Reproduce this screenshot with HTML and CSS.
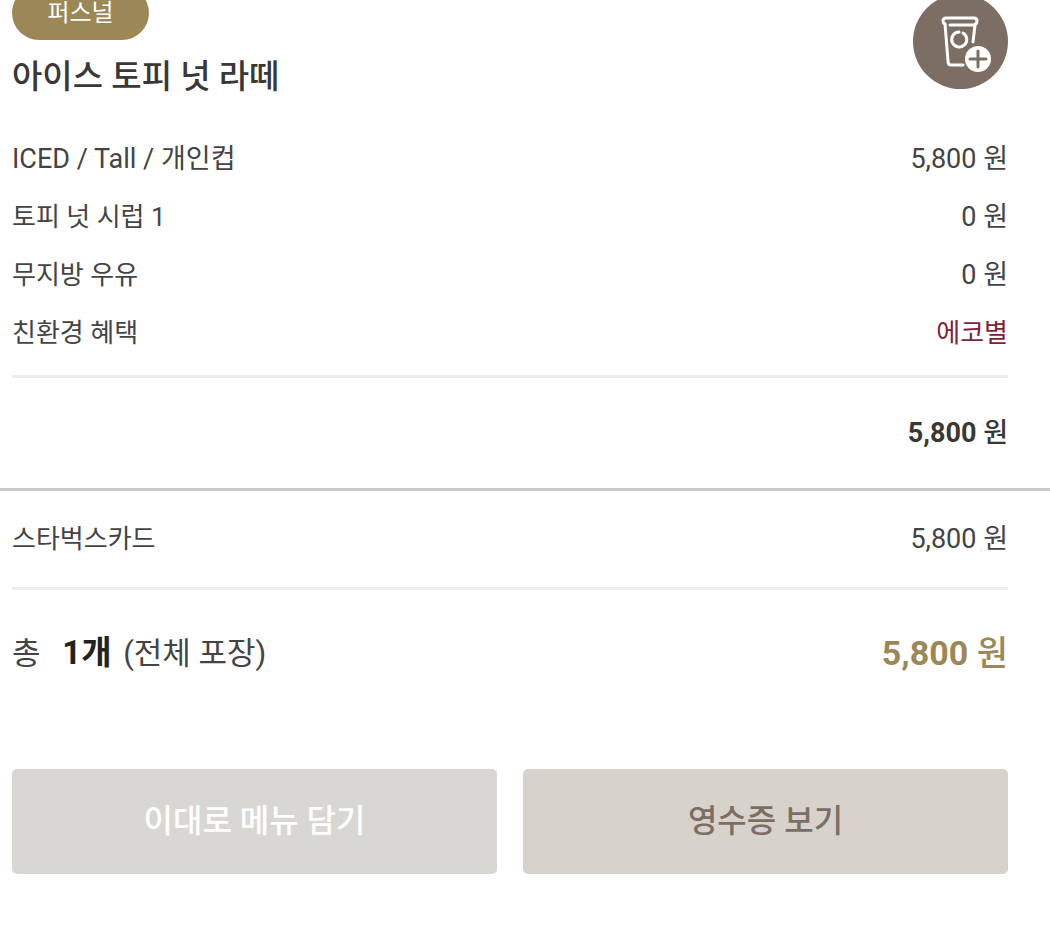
FILE: index.html
```html
<!DOCTYPE html>
<html lang="ko">
<head>
    <meta charset="UTF-8">
    <meta name="viewport" content="width=device-width, initial-scale=1.0">
    <title>주문 내역</title>
    <link rel="stylesheet" href="styles.css">
</head>
<body>
    <main>
        <section class="order">
            <div class="item-head">
                <div>
                    <span class="badge">퍼스널</span>
                    <h1>아이스 토피 넛 라떼</h1>
                </div>
                <button class="cup-button" type="button" aria-label="나만의 메뉴 등록">
                    <svg viewBox="0 0 95 95" fill="none" stroke="#fff" stroke-width="3" stroke-linecap="round" stroke-linejoin="round">
                        <path d="M32 30q-2-1-2-3 0-3 3-3h28q3 0 3 3 0 3-3 4H37"/>
                        <path d="M32 30l3 37q0 4 3 4h12M62 31l-2 17"/>
                        <path d="M50 39a7.5 7.5 0 1 1-4-1"/>
                        <circle cx="65" cy="65" r="13" fill="#fff" stroke="none"/>
                        <path d="M65 57v16M57 65h16" stroke="#7d6e64"/>
                    </svg>
                </button>
            </div>

            <dl class="rows">
                <div class="row"><dt class="option">ICED / Tall / 개인컵</dt><dd class="price">5,800 원</dd></div>
                <div class="row"><dt>토피 넛 시럽 1</dt><dd class="price">0 원</dd></div>
                <div class="row"><dt>무지방 우유</dt><dd class="price">0 원</dd></div>
                <div class="row"><dt>친환경 혜택</dt><dd class="eco">에코별</dd></div>
            </dl>
            <p class="subtotal">5,800 <span class="won">원</span></p>
        </section>

        <section class="payment">
            <dl class="card-row">
                <div class="row"><dt>스타벅스카드</dt><dd class="price">5,800 원</dd></div>
            </dl>
            <div class="total">
                <p>총 <strong>1개</strong> (전체 포장)</p>
                <strong class="total-price">5,800 <span class="won">원</span></strong>
            </div>
            <div class="actions">
                <button class="add" type="button">이대로 메뉴 담기</button>
                <button class="receipt" type="button">영수증 보기</button>
            </div>
        </section>
    </main>
</body>
</html>
```

FILE: styles.css
```css
* {
    box-sizing: border-box;
}
body {
    margin: 0;
    background: #fff;
    color: #444;
    font-family: Roboto, "Noto Sans CJK KR", sans-serif;
    font-size: 26px;
    line-height: 58px;
}
h1, p, dl, dd {
    margin: 0;
}
button {
    border: none;
    padding: 0;
    font-family: inherit;
    cursor: pointer;
}
.order {
    padding: 0 42px 0 12px;
    border-bottom: 3px solid #c9c9c9;
}
.item-head {
    display: flex;
    justify-content: space-between;
    align-items: flex-start;
    padding-bottom: 17px;
}
.badge {
    display: block;
    width: 137px;
    height: 54px;
    margin-top: -14px;
    border-radius: 27px;
    background: #9c8856;
    color: #fff;
    font-size: 24px;
    line-height: 54px;
    text-align: center;
}
h1 {
    color: #3a3837;
    font-size: 33px;
    font-weight: 500;
    line-height: 73px;
}
.cup-button {
    width: 95px;
    height: 95px;
    margin-top: -6px;
    border-radius: 50%;
    background: #7d6e64;
}
.cup-button svg {
    display: block;
}
.row {
    display: flex;
    justify-content: space-between;
}
.rows {
    padding-bottom: 13px;
    border-bottom: 3px solid #ededed;
}
.option, .price {
    font-size: 27px;
}
.eco {
    color: #7f2338;
}
.subtotal {
    padding: 26px 0;
    color: #3a3833;
    font-size: 27px;
    font-weight: 700;
    text-align: right;
}
.won {
    font-weight: 500;
}
.payment {
    padding: 0 42px 0 12px;
}
.card-row {
    padding: 19px 0;
    border-bottom: 3px solid #ededed;
}
.total {
    display: flex;
    justify-content: space-between;
    padding: 34px 0 86px;
    font-size: 31px;
}
.total p strong {
    margin: 0 4px 0 14px;
    color: #222;
    font-size: 33px;
}
.total-price {
    color: #9c8856;
    font-size: 34px;
}
.actions {
    display: grid;
    grid-template-columns: 1fr 1fr;
    gap: 26px;
}
.actions button {
    height: 105px;
    padding-bottom: 8px;
    border-radius: 5px;
    font-size: 32px;
    font-weight: 500;
}
.actions .add {
    background: #d8d7d3;
    color: #fff;
}
.actions .receipt {
    background: #d7d2cc;
    color: #7d6e64;
}
```
